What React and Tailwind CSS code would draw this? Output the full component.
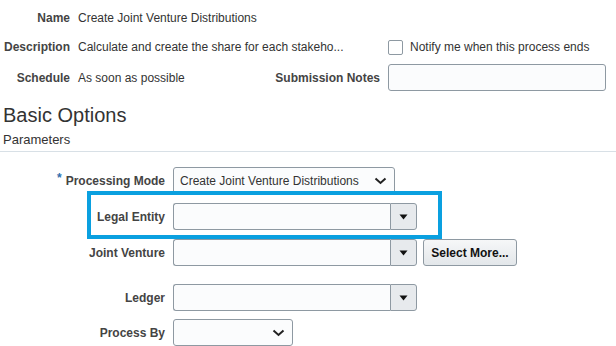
import React from "react";

const Chevron = () => (
  <svg width="13" height="8" viewBox="0 0 13 8" className="shrink-0">
    <path d="M1.5 1.5 L6.5 6 L11.5 1.5" fill="none" stroke="#222" strokeWidth="2" />
  </svg>
);

const Triangle = () => (
  <svg width="9" height="6" viewBox="0 0 9 6">
    <path d="M0.5 0.5 H8.5 L4.5 5.5 Z" fill="#111" />
  </svg>
);

const Combo = () => (
  <div className="flex h-[27px]">
    <div className="w-[217px] h-full border border-[#8e99a2] border-r-0 rounded-l-[3px] bg-[#fbfcfd]" />
    <div className="w-[27px] h-full border border-[#8e99a2] rounded-r-[3px] bg-[#e7eaed] flex items-center justify-center">
      <Triangle />
    </div>
  </div>
);

const Row = ({ label, children, className = "", star }) => (
  <div className={`flex items-center ${className}`}>
    <div className="w-[165px] text-right font-bold text-[#444]">
      {star && <span className="text-[#2f6fae] mr-[4px] relative top-[-3px]">*</span>}
      {label}
    </div>
    <div className="ml-2 flex items-center">{children}</div>
  </div>
);

export default function App() {
  return (
    <div
      className="w-[616px] h-[346px] overflow-hidden bg-white text-[12px] text-[#333] leading-[16px]"
      style={{ fontFamily: "Arial, 'Liberation Sans', sans-serif" }}
    >
      <div className="flex items-center h-[36px]">
        <div className="w-[70px] text-right font-bold text-[#444]">Name</div>
        <div className="ml-2">Create Joint Venture Distributions</div>
      </div>
      <div className="flex items-center h-[22px]">
        <div className="w-[70px] text-right font-bold text-[#444]">Description</div>
        <div className="ml-2 w-[302px]">Calculate and create the share for each stakeho...</div>
        <div className="ml-2 w-[15px] h-[15px] border border-[#8e99a2] rounded-[2px] bg-white" />
        <div className="ml-[7px]">Notify me when this process ends</div>
      </div>
      <div className="flex items-center h-[27px] mt-[6px]">
        <div className="w-[70px] text-right font-bold text-[#444]">Schedule</div>
        <div className="ml-2 w-[302px] flex justify-between">
          <span>As soon as possible</span>
          <span className="font-bold text-[#444]">Submission Notes</span>
        </div>
        <div className="ml-2 w-[218px] h-[27px] border border-[#8e99a2] rounded-[3px] bg-[#fbfcfd]" />
      </div>

      <h2 className="mt-[10px] ml-[3px] text-[20px] leading-[28px] text-[#333]">Basic Options</h2>
      <div className="mt-[3px] pl-[3px] pb-[3px] border-b border-[#d8e0e6] text-[13px] text-[#333]">Parameters</div>

      <div className="mt-[15px] flex flex-col">
        <Row label="Processing Mode" star>
          <div className="w-[222px] h-[27px] border border-[#8e99a2] rounded-[3px] bg-[#fbfcfd] flex items-center justify-between pl-[6px] pr-[7px]">
            <span>Create Joint Venture Distributions</span>
            <Chevron />
          </div>
        </Row>
        <Row label="Legal Entity" className="mt-[9px] relative">
          <Combo />
          <div className="absolute left-[87px] top-[-12px] w-[355px] h-[48px] border-[4px] border-[#0aa0e0] pointer-events-none" />
        </Row>
        <Row label="Joint Venture" className="mt-[9px]">
          <Combo />
          <button className="ml-[6px] w-[94px] h-[27px] border border-[#8e99a2] rounded-[3px] bg-gradient-to-b from-[#f6f7f8] to-[#e3e7ea] font-bold text-[#111]">
            Select More...
          </button>
        </Row>
        <Row label="Ledger" className="mt-[18px]">
          <Combo />
        </Row>
        <Row label="Process By" className="mt-[8px]">
          <div className="w-[120px] h-[27px] border border-[#8e99a2] rounded-[3px] bg-[#fbfcfd] flex items-center justify-end pr-[7px]">
            <Chevron />
          </div>
        </Row>
      </div>
    </div>
  );
}
